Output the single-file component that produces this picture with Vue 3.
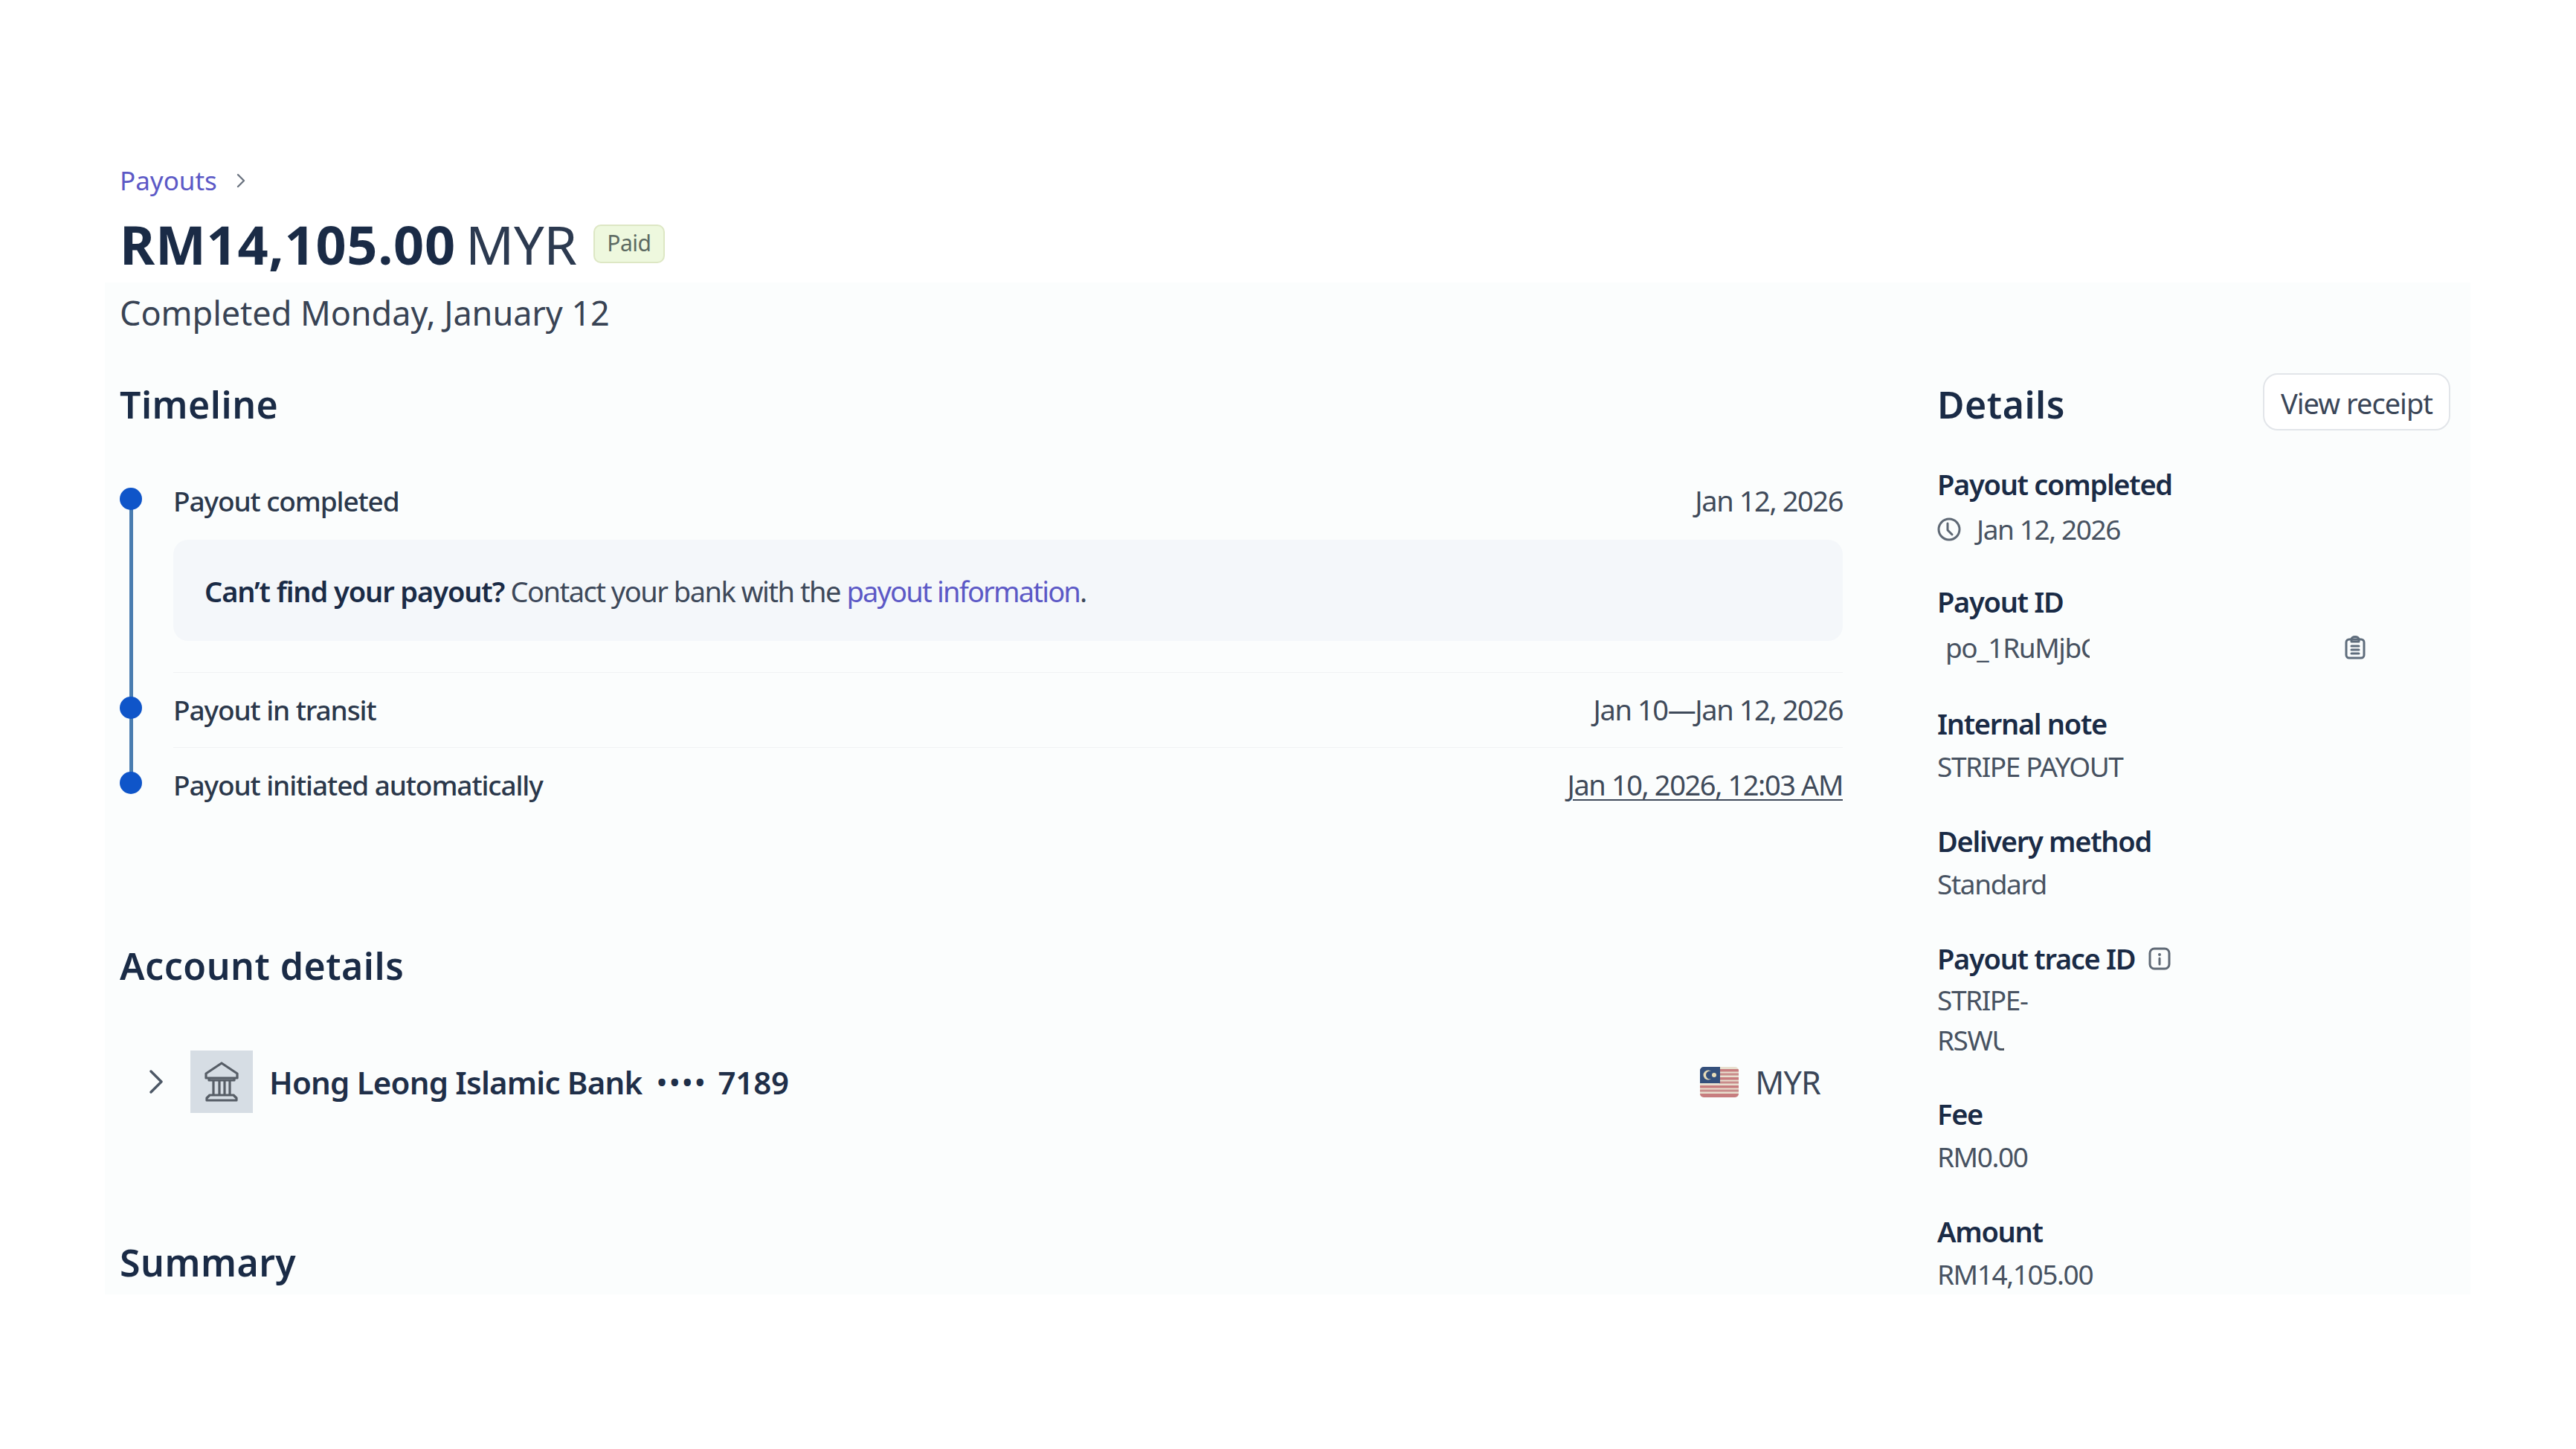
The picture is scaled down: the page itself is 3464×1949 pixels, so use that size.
<script setup>
const steps = [
  { title: 'Payout completed', date: 'Jan 12, 2026', note: true },
  { title: 'Payout in transit', date: 'Jan 10—Jan 12, 2026' },
  { title: 'Payout initiated automatically', date: 'Jan 10, 2026, 12:03 AM', underline: true }
]
</script>

<template>
  <div class="page">
    <nav class="crumb">
      <a class="link">Payouts</a>
      <svg class="crumb-arrow" viewBox="0 0 16 24" fill="none"><path d="M4 4l8 8-8 8" stroke="#6b7480" stroke-width="2.4" stroke-linecap="round" stroke-linejoin="round"/></svg>
    </nav>
    <h1 class="title">
      <b>RM14,105.00</b>
      <span class="cur">MYR</span>
      <span class="badge">Paid</span>
    </h1>
    <p class="sub">Completed Monday, January 12</p>

    <div class="grid">
      <main>
        <h2 class="h2">Timeline</h2>
        <ol class="steps">
          <li v-for="s in steps" :key="s.title" class="step">
            <span class="dot"></span>
            <div class="step-head">
              <span class="step-title">{{ s.title }}</span>
              <span class="step-date" :class="{ under: s.underline }">{{ s.date }}</span>
            </div>
            <div v-if="s.note" class="note">
              <b>Can’t find your payout?</b> Contact your bank with the <a class="link">payout information</a>.
            </div>
          </li>
        </ol>

        <h2 class="h2 account-h">Account details</h2>
        <div class="bank">
          <svg class="bank-chev" viewBox="0 0 20 32" fill="none"><path d="M3 2l14 14L3 30" stroke="#4d5866" stroke-width="3.4" stroke-linecap="round" stroke-linejoin="round"/></svg>
          <span class="bank-box">
            <svg viewBox="0 0 54 54" width="54" height="54" fill="none" stroke="#575e67" stroke-width="3.2" stroke-linejoin="round" stroke-linecap="round">
              <path d="M27 2L6 16v6h42v-6z"/>
              <path d="M10 23v2h34v-2"/>
              <path d="M16 26v18M24 26v18M31 26v18M38 26v18"/>
              <path d="M11 45h32l4 4v3H7v-3z"/>
            </svg>
          </span>
          <span class="bank-name">Hong Leong Islamic Bank</span>
          <span class="bank-dots">••••</span>
          <span class="bank-num">7189</span>
          <span class="bank-cur">
            <svg class="flag" viewBox="0 0 52 41">
              <clipPath id="flag-clip"><rect width="52" height="41" rx="5"/></clipPath>
              <g clip-path="url(#flag-clip)">
                <rect width="52" height="41" fill="#e8e0cf"/>
                <path d="M0 3h52v3.5H0zM0 14h52v3.5H0zM0 25h52v3.5H0zM0 36h52v5H0z" fill="#c77d7f"/>
                <path d="M26 8.500h26v3H26zM26 19.500h26v3H26zM0 30.500h52v3H0z" fill="#c98c8b"/>
                <rect width="27" height="22" fill="#34507c"/>
                <circle cx="11" cy="11" r="6.500" fill="#e8dcb8"/>
                <circle cx="13.500" cy="11" r="5.500" fill="#34507c"/>
                <circle cx="19" cy="11" r="3" fill="#e8dcb8"/>
              </g>
            </svg>
            MYR
          </span>
        </div>

        <h2 class="h2 summary-h">Summary</h2>
      </main>

      <aside>
        <div class="aside-head">
          <h2 class="h2">Details</h2>
          <button class="btn">View receipt</button>
        </div>
        <dl class="details">
          <div class="item item-date">
            <dt>Payout completed</dt>
            <dd class="with-icon">
              <svg class="clock" viewBox="0 0 32 32" fill="none" stroke="#5f6975" stroke-width="3" stroke-linecap="round" stroke-linejoin="round"><circle cx="16" cy="16" r="14"/><path d="M14 8v9l6 6"/></svg>
              Jan 12, 2026
            </dd>
          </div>
          <div class="item item-id">
            <dt>Payout ID</dt>
            <dd class="id-row">
              <span class="id-text">po_1RuMjbC</span>
              <svg class="clip" viewBox="0 0 28 32" fill="none" stroke="#5f6d7c" stroke-width="3" stroke-linecap="round" stroke-linejoin="round"><rect x="2" y="5" width="24" height="25" rx="4"/><path d="M9 5c0-2 2-3.500 5-3.500S19 3 19 5v3H9z"/><path d="M9 14h10M9 19h10M9 24h10"/></svg>
            </dd>
          </div>
          <div class="item"><dt>Internal note</dt><dd>STRIPE PAYOUT</dd></div>
          <div class="item"><dt>Delivery method</dt><dd>Standard</dd></div>
          <div class="item item-trace">
            <dt>Payout trace ID
              <svg class="info" viewBox="0 0 30 31" fill="none"><rect x="2" y="2" width="26" height="27" rx="6" stroke="#5f6975" stroke-width="3"/><circle cx="15" cy="10" r="2" fill="#5f6975"/><path d="M15 15v8" stroke="#5f6975" stroke-width="3" stroke-linecap="round"/></svg>
            </dt>
            <dd>STRIPE-</dd>
            <dd class="trace-cut">RSWU</dd>
          </div>
          <div class="item"><dt>Fee</dt><dd>RM0.00</dd></div>
          <div class="item"><dt>Amount</dt><dd>RM14,105.00</dd></div>
        </dl>
      </aside>
    </div>
  </div>
</template>

<style scoped>
.page {
  box-sizing: border-box;
  width: 3464px;
  height: 1949px;
  overflow: hidden;
  padding: 218px 0 0 161px;
  background: linear-gradient(#fbfdfd, #fbfdfd) 141px 380px / 3181px 1361px no-repeat #fff;
  font-family: "Noto Sans", "Open Sans", sans-serif;
  color: #3d4859;
}
.link { color: #5c59c6; }
.crumb {
  display: flex;
  align-items: center;
  gap: 24px;
  height: 50px;
  font-size: 35px;
  line-height: 50px;
}
.crumb-arrow { width: 16px; height: 24px; }
.title {
  display: flex;
  align-items: baseline;
  margin: 15px 0 0;
  font-size: 72px;
  line-height: 90px;
  font-weight: 400;
  color: #1a2b46;
}
.title b { font-weight: 700; letter-spacing: 0.7px; }
.cur { margin-left: 13px; letter-spacing: -0.3px; color: #2c3a50; }
.badge {
  align-self: center;
  box-sizing: border-box;
  margin-left: 22px;
  width: 96px;
  height: 52px;
  border: 2px solid #dde7c4;
  border-radius: 10px;
  background: #eef8de;
  color: #5d6a62;
  font-size: 30px;
  line-height: 46px;
  text-align: center;
  letter-spacing: -0.5px;
}
.sub {
  margin: 18px 0 0;
  font-size: 45px;
  line-height: 60px;
  letter-spacing: -0.05px;
  color: #384354;
}
.grid {
  display: grid;
  grid-template-columns: 2317px 690px;
  column-gap: 127px;
  margin-top: 51px;
}
.h2 {
  margin: 0;
  font-size: 50px;
  line-height: 85px;
  font-weight: 600;
  letter-spacing: 0.5px;
  color: #1a2b46;
}
.steps {
  position: relative;
  list-style: none;
  margin: 56px 0 0;
  padding: 0 0 0 72px;
}
.steps::before {
  content: "";
  position: absolute;
  left: 13px;
  top: 27px;
  height: 382px;
  width: 5px;
  background: #4a7db0;
}
.step { position: relative; padding: 0 0 24px; border-bottom: 1px solid #f0f2f4; margin-bottom: 19px; }
.step:last-child { padding: 0; margin: 0; border: 0; }
.dot {
  position: absolute;
  left: -72px;
  top: 13px;
  width: 30px;
  height: 30px;
  border-radius: 50%;
  background: #0f55c9;
}
.step-head {
  display: flex;
  justify-content: space-between;
  height: 57px;
  line-height: 61px;
}
.step-title { font-size: 37px; font-weight: 500; letter-spacing: -1.1px; color: #2b384b; }
.step-date { font-size: 38px; letter-spacing: -1.4px; color: #3f4a5a; }
.under { text-decoration: underline; text-underline-offset: 5px; text-decoration-thickness: 2px; }
.note {
  box-sizing: border-box;
  height: 136px;
  margin: 26px 0 18px;
  padding: 0 42px;
  border-radius: 20px;
  background: #f4f7fa;
  font-size: 38px;
  line-height: 138px;
  letter-spacing: -1.5px;
}
.note .link { letter-spacing: -1.8px; }
.note b { font-weight: 600; letter-spacing: -1.1px; color: #1a2b46; }
.account-h { margin-top: 175px; }
.bank {
  display: flex;
  align-items: center;
  margin-top: 71px;
  padding: 0 30px 0 39px;
  height: 84px;
  font-size: 42px;
  font-weight: 600;
  letter-spacing: -0.8px;
  color: #1f2f49;
}
.bank-chev { width: 20px; height: 32px; margin-right: 36px; }
.bank-box {
  display: flex;
  align-items: center;
  justify-content: center;
  width: 84px;
  height: 84px;
  margin-right: 22px;
  background: #d6dde4;
}
.bank-dots { margin-left: 20px; letter-spacing: 3.5px; font-size: 36px; }
.bank-num { margin-left: 14px; letter-spacing: -0.2px; }
.bank-cur {
  display: flex;
  align-items: center;
  gap: 22px;
  margin-left: auto;
  font-weight: 400;
  font-size: 43px;
  color: #3a4658;
}
.flag { width: 52px; height: 41px; }
.summary-h { margin-top: 159px; }
.aside-head {
  display: flex;
  justify-content: space-between;
  align-items: flex-start;
}
.btn {
  box-sizing: border-box;
  width: 252px;
  height: 77px;
  padding: 0;
  border: 2px solid #e2e5e9;
  border-radius: 20px;
  background: #fff;
  font: 400 38px/77px "Noto Sans", "Open Sans", sans-serif;
  letter-spacing: -1px;
  color: #3a4658;
}
.details { margin: 36px 0 0; }
.item { margin-bottom: 44px; }
.item dt {
  display: flex;
  align-items: center;
  gap: 18px;
  height: 57px;
  font-size: 38px;
  line-height: 57px;
  font-weight: 600;
  letter-spacing: -1.3px;
  color: #1a2b46;
}
.item dd {
  margin: 0;
  font-size: 37px;
  line-height: 57px;
  letter-spacing: -1.4px;
  color: #475261;
}
.item-date { margin-bottom: 38px; }
.item-date .with-icon {
  display: flex;
  align-items: center;
  gap: 21px;
  line-height: 63px;
}
.clock { width: 32px; height: 32px; }
.item-id { margin-bottom: 41px; }
.item-id .id-row {
  display: flex;
  align-items: center;
  padding-left: 11px;
  line-height: 66px;
}
.id-text { display: block; width: 194px; overflow: hidden; white-space: nowrap; }
.clip { width: 28px; height: 32px; margin-left: 343px; }
.info { width: 30px; height: 31px; }
.item-trace { margin-bottom: 44px; }
.item-trace dd { line-height: 54px; }
.item-trace .trace-cut { width: 90px; overflow: hidden; }
</style>
